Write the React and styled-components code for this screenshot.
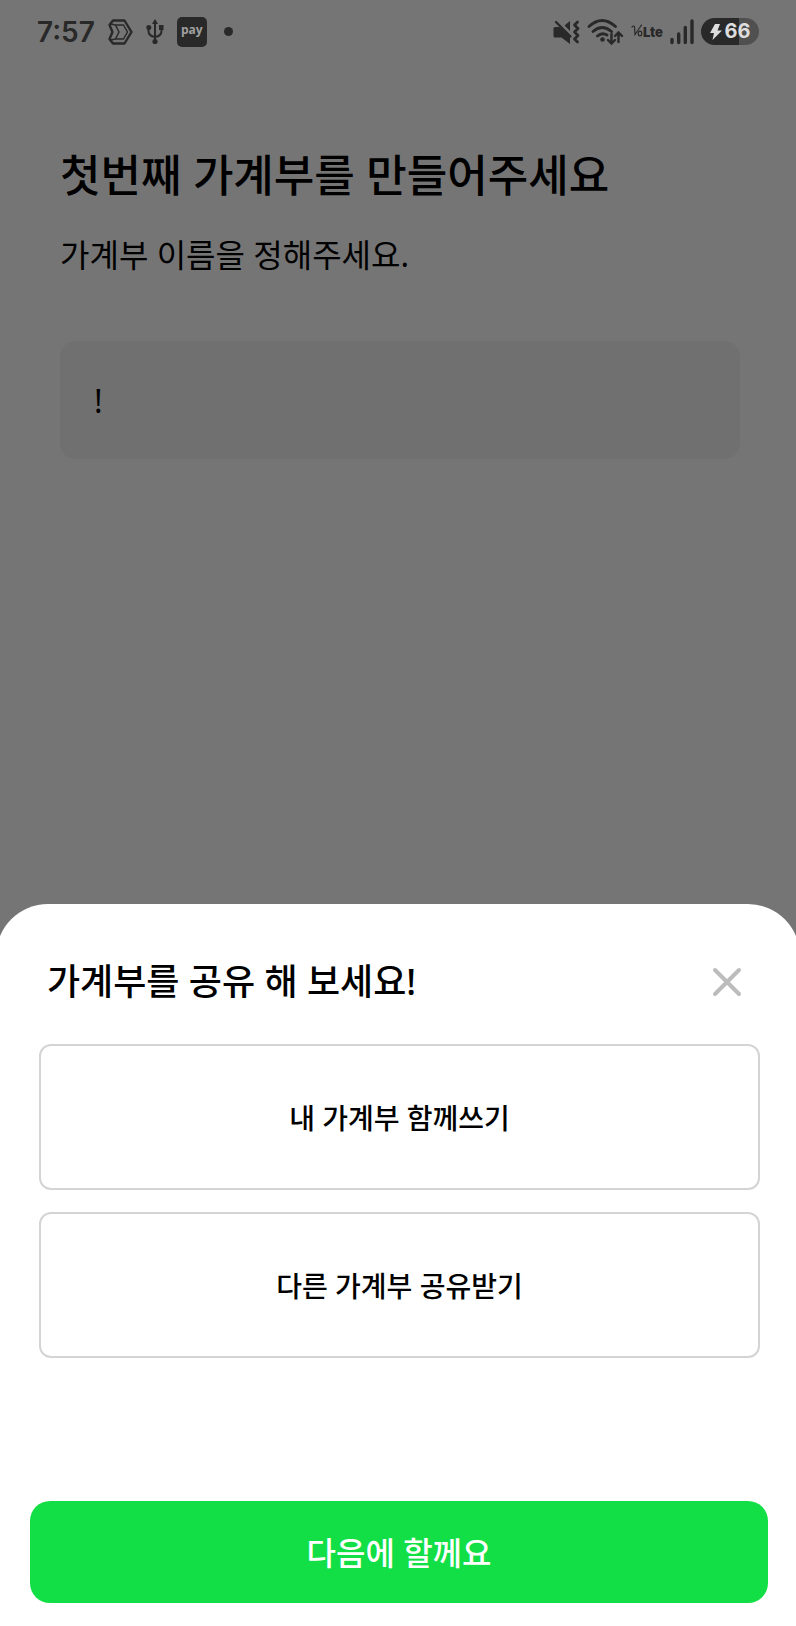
import { useState } from "react";
import styled, { createGlobalStyle } from "styled-components";

const GlobalStyle = createGlobalStyle`
  * {
    box-sizing: border-box;
  }
  body {
    margin: 0;
    background: #757575;
    color: #000000;
    font-family: "Noto Sans", "Noto Sans CJK KR", sans-serif;
  }
  button,
  input {
    font-family: inherit;
  }
`;

const Main = styled.div`
  display: flex;
  flex-direction: column;
  min-height: 100vh;
  overflow: hidden;
  background: #757575;
`;

const StatusBar = styled.header`
  display: flex;
  justify-content: space-between;
  align-items: center;
  height: 63px;
  padding: 0 37px;
  color: #292929;
`;

const StatusGroup = styled.div`
  display: flex;
  align-items: center;
  gap: ${(props) => props.$gap}px;
`;

const Clock = styled.time`
  font-family: Inter, Roboto, sans-serif;
  font-size: 28px;
  font-weight: 600;
  line-height: 32px;
`;

const PayBadge = styled.span`
  width: 30px;
  height: 30px;
  border-radius: 5px;
  background: #292929;
  color: #a0a0a0;
  font-family: "Open Sans", sans-serif;
  font-size: 12px;
  font-weight: 700;
  line-height: 26px;
  text-align: center;
`;

const Dot = styled.span`
  width: 9px;
  height: 9px;
  margin-left: 4px;
  border-radius: 50%;
  background: #292929;
`;

const Battery = styled.span`
  display: flex;
  align-items: center;
  justify-content: center;
  gap: 3px;
  width: 58px;
  height: 27px;
  border-radius: 14px;
  background: linear-gradient(90deg, #292929 66%, #505050 66%);
  color: #dddddd;
  font-family: Inter, Roboto, sans-serif;
  font-size: 20px;
  font-weight: 700;
  line-height: 27px;
`;

const Form = styled.main`
  flex: 1;
  padding: 80px 56px 0 60px;
`;

const Title = styled.h1`
  margin: 0;
  font-size: 44px;
  font-weight: 500;
  line-height: 64px;
`;

const Description = styled.label`
  display: block;
  margin-top: 24px;
  font-size: 32px;
  font-weight: 400;
  line-height: 48px;
`;

const NameInput = styled.input`
  display: block;
  width: 100%;
  height: 118px;
  margin-top: 62px;
  padding: 0 34px;
  border: none;
  border-radius: 16px;
  outline: none;
  background: #707070;
  color: #000000;
  font-size: 32px;
`;

const Sheet = styled.section`
  margin: 0 -4px;
  padding: 48px 32px 23px 34px;
  border-radius: 52px 52px 0 0;
  background: #ffffff;
`;

const SheetHeader = styled.div`
  display: flex;
  justify-content: space-between;
  align-items: center;
  height: 60px;
  padding: 0 26px 0 17px;
`;

const SheetTitle = styled.h2`
  margin: 0;
  font-size: 36px;
  font-weight: 500;
  line-height: 60px;
`;

const CloseButton = styled.button`
  display: flex;
  padding: 0;
  border: none;
  background: none;
  color: #bcbcbc;
  cursor: pointer;
`;

const Options = styled.div`
  display: flex;
  flex-direction: column;
  gap: 22px;
  padding: 0 8px 0 9px;
  margin-top: 32px;
`;

const OptionButton = styled.button`
  height: 146px;
  border: 2px solid #d4d4d4;
  border-radius: 12px;
  background: #ffffff;
  color: #000000;
  font-size: 28px;
  font-weight: 500;
  cursor: pointer;
`;

const LaterButton = styled.button`
  display: block;
  width: 100%;
  height: 102px;
  margin-top: 143px;
  padding: 0 0 2px;
  border: none;
  border-radius: 20px;
  background: #12df45;
  color: #ffffff;
  font-size: 32px;
  font-weight: 500;
  cursor: pointer;
`;

const HexIcon = () => (
  <svg width="25" height="26" viewBox="0 0 25 26" fill="none" stroke="currentColor" strokeLinejoin="round">
    <path d="M5 1.500h11.500L23.500 13l-7 11.500H5L1.500 20 4.500 13 1.500 6z" strokeWidth="2.400" />
    <path d="M7.500 6h8l4 7-4 7h-8l3.500-7zM2.500 5l5 1M2.500 21l5-1" strokeWidth="1.500" />
  </svg>
);

const UsbIcon = () => (
  <svg width="18" height="26" viewBox="0 0 18 26" fill="none" stroke="currentColor" strokeWidth="2">
    <path d="M9 4v18M2.500 9v3q0 5 6.500 6 6.500-1 6.500-6V9" />
    <path d="M9 0l3 5H6z" fill="currentColor" stroke="none" />
    <circle cx="9" cy="22.500" r="2.600" fill="currentColor" stroke="none" />
    <circle cx="2.800" cy="8.500" r="2.500" fill="currentColor" stroke="none" />
    <path d="M13 6h4.500v5H13z" fill="currentColor" stroke="none" />
  </svg>
);

const MuteIcon = () => (
  <svg width="27" height="26" viewBox="0 0 27 26" fill="none" stroke="currentColor">
    <path d="M2 8h5l10 10v7l-8.500-6.500H2q-1.500 0-1.500-1.500V9.500Q.5 8 2 8zM17 2v10l-5.500-5.500z" fill="currentColor" stroke="none" />
    <path d="M3 3l14.500 14.500" strokeWidth="2.400" strokeLinecap="round" />
    <path d="M24.500 3l-3 3 3.500 3.500-3.500 3.500 3.500 3.500-3.500 3.500 3 3" strokeWidth="2.800" strokeLinecap="round" strokeLinejoin="round" />
  </svg>
);

const WifiIcon = () => (
  <svg width="37" height="28" viewBox="0 0 37 28" fill="none" stroke="currentColor" strokeWidth="2.800" strokeLinecap="round">
    <path d="M2 8.500Q15-3.500 28.500 8.500M6 13.500q9-8 18.500 0M10.500 18q4.500-4 9.500-1" />
    <circle cx="15.500" cy="21.500" r="2.300" fill="currentColor" stroke="none" />
    <path d="M24.500 16v9M21 22l3.500 3.500L28 22M31.500 24v-9M28 18l3.500-3.500L35 18" strokeWidth="2.400" />
  </svg>
);

const LteLabel = styled.span`
  font-family: Inter, sans-serif;
  font-size: 13px;
  font-weight: 900;
  line-height: 26px;
`;

const VoMark = () => (
  <svg width="12" height="13" viewBox="0 0 12 13" fill="none" stroke="currentColor" strokeWidth="1.200" strokeLinecap="round">
    <path d="M1 3q2-2 2.500 0L4 10.500 10.500 1" />
    <ellipse cx="9" cy="9.500" rx="1.800" ry="2.300" />
  </svg>
);

const SignalIcon = () => (
  <svg width="24" height="26" viewBox="0 0 24 26" fill="none" stroke="currentColor" strokeWidth="3.400" strokeLinecap="round">
    <path d="M2 20.500v3M8.700 15v8.500M15.300 8.500v15M22 2v21.500" />
  </svg>
);

const BoltIcon = () => (
  <svg width="12" height="16" viewBox="0 0 12 16" fill="currentColor">
    <path d="M5 0L0 9h4L2.500 16 12 6.500H7.500L10 0z" />
  </svg>
);

const CloseIcon = () => (
  <svg width="30" height="30" viewBox="0 0 30 30" stroke="currentColor" strokeWidth="4" strokeLinecap="round">
    <path d="M3 3l24 24M27 3L3 27" />
  </svg>
);

const App = () => {
  const [name, setName] = useState("!");
  const [open, setOpen] = useState(true);

  return (
    <>
      <GlobalStyle />
      <Main>
        <StatusBar>
          <StatusGroup $gap={13}>
            <Clock>7:57</Clock>
            <HexIcon />
            <UsbIcon />
            <PayBadge>pay</PayBadge>
            <Dot />
          </StatusGroup>
          <StatusGroup $gap={7}>
            <MuteIcon />
            <WifiIcon />
            <LteLabel>
              <VoMark />
              Lte
            </LteLabel>
            <SignalIcon />
            <Battery>
              <BoltIcon />
              66
            </Battery>
          </StatusGroup>
        </StatusBar>
        <Form>
          <Title>첫번째 가계부를 만들어주세요</Title>
          <Description htmlFor="book-name">가계부 이름을 정해주세요.</Description>
          <NameInput
            id="book-name"
            value={name}
            onChange={(e) => setName(e.target.value)}
          />
        </Form>
        {open && (
          <Sheet>
            <SheetHeader>
              <SheetTitle>가계부를 공유 해 보세요!</SheetTitle>
              <CloseButton aria-label="닫기" onClick={() => setOpen(false)}>
                <CloseIcon />
              </CloseButton>
            </SheetHeader>
            <Options>
              <OptionButton>내 가계부 함께쓰기</OptionButton>
              <OptionButton>다른 가계부 공유받기</OptionButton>
            </Options>
            <LaterButton onClick={() => setOpen(false)}>다음에 할께요</LaterButton>
          </Sheet>
        )}
      </Main>
    </>
  );
};

export default App;
